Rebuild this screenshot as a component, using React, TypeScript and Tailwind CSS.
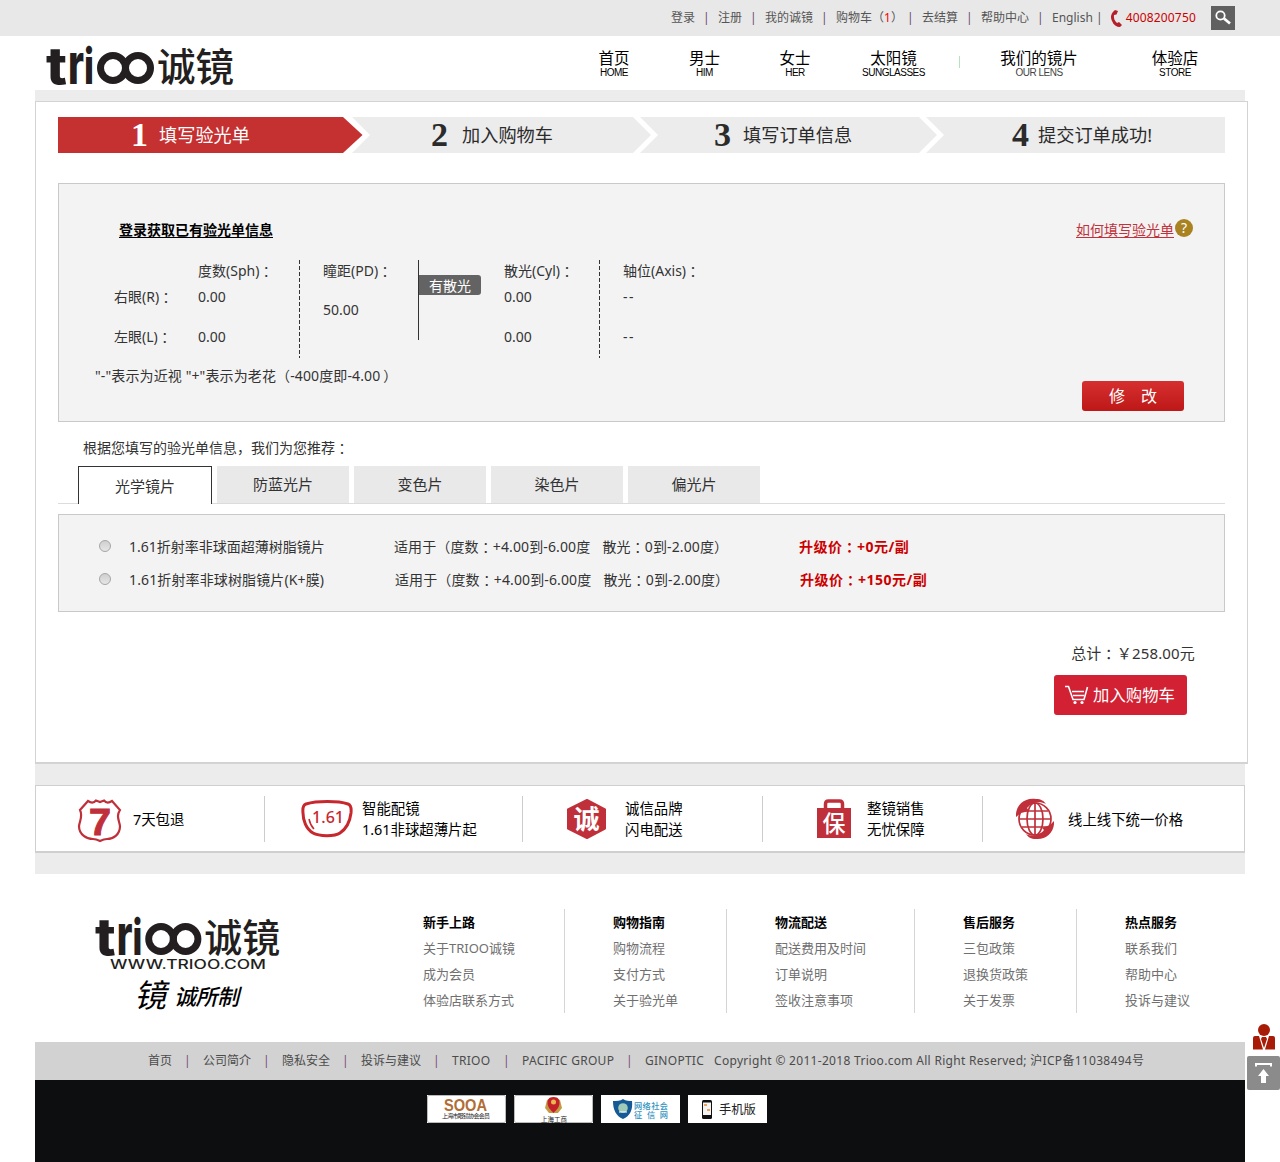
import React from 'react';

const SANS = "font-['Noto_Sans','Noto_Sans_CJK_SC',sans-serif]";
const CJK = 'Noto Sans CJK SC, sans-serif';

const Colon = () => <span className="-mr-[3.5px] pl-[3.5px]">：</span>;

function Brand() {
  return (
    <g fill="#231f20">
      <text x="0" y="38" fontFamily="Inter, sans-serif" fontWeight="800" fontSize="52" textLength="21" lengthAdjust="spacingAndGlyphs">t</text>
      <text x="22" y="38" fontFamily="Inter, sans-serif" fontWeight="800" fontSize="56" textLength="16" lengthAdjust="spacingAndGlyphs">r</text>
      <text x="38" y="38" fontFamily="Inter, sans-serif" fontWeight="800" fontSize="50" textLength="10" lengthAdjust="spacingAndGlyphs">i</text>
      <g fill="none" stroke="#231f20" strokeWidth="7">
        <circle cx="67" cy="22" r="12.500" />
        <circle cx="92" cy="22" r="12.500" />
      </g>
      <text x="111" y="34.500" fontFamily={CJK} fontWeight="500" fontSize="38.500" textLength="77" lengthAdjust="spacingAndGlyphs">诚镜</text>
    </g>
  );
}

const topLinks: [string, string][] = [
  ['登录', 'w-[47px]'],
  ['注册', 'w-[47px]'],
  ['我的诚镜', 'w-[71px]'],
  ['cart', 'w-[86px]'],
  ['去结算', 'w-[59px]'],
  ['帮助中心', 'w-[71px]'],
];

function TopBar() {
  return (
    <div className="flex h-9 items-center bg-[#e8e8e8] pl-[671px] text-xs text-[#555]">
      {topLinks.map(([label, w]) => (
        <div key={label} className={`flex shrink-0 whitespace-nowrap ${w}`}>
          {label === 'cart' ? (
            <span className="w-[74px]">购物车（<span className="text-[#f00]">1</span>）</span>
          ) : (
            <span>{label}</span>
          )}
          <span className={label === 'cart' ? '-ml-[3px] text-[#6b4b6b]' : 'ml-2 text-[#6b4b6b]'}>|</span>
        </div>
      ))}
      <span className="w-[44px]">English</span>
      <span>|</span>
      <svg className="ml-[7px]" width="13" height="19" viewBox="0 0 13 19">
        <path d="M5 1C1 4 0 8 2 12c1.500 4 4.500 6 8 6l2-2-3-3-2 1C4.500 12 3.500 9 4 6l2.500-.5L8 2Z" fill="#b41f2b" />
      </svg>
      <span className="ml-[3px] w-[85px] tracking-[0.17px] text-[#c00]">4008200750</span>
      <div className="flex h-6 w-6 items-center justify-center bg-[#606060]">
        <svg width="18" height="18" viewBox="0 0 18 18" fill="none" stroke="#fff">
          <circle cx="6.500" cy="6.500" r="4.200" strokeWidth="1.800" />
          <path d="m10 9.500 6 5" strokeWidth="2.800" />
        </svg>
      </div>
    </div>
  );
}

const nav: [string, string, string][] = [
  ['首页', 'HOME', 'w-[90px]'],
  ['男士', 'HIM', 'w-[91px]'],
  ['女士', 'HER', 'w-[90px]'],
  ['太阳镜', 'SUNGLASSES', 'w-[107px]'],
  ['我们的镜片', 'OUR LENS', 'w-[150px]'],
  ['体验店', 'STORE', 'w-[122px]'],
];

function Header() {
  return (
    <header className="flex h-[54px]">
      <svg className="mt-[10px] ml-[46px] shrink-0 overflow-visible" width="190" height="40" viewBox="0 0 190 40">
        <Brand />
      </svg>
      <nav className="ml-[333px] flex">
        {nav.map(([zh, en, w], i) => (
          <React.Fragment key={en}>
            {i === 4 && <span className="mt-5 ml-3 h-3 w-px bg-[#b5e3bc]" />}
            <a className={`flex flex-col items-center pt-3 text-black ${w} ${i === 4 ? 'ml-1' : ''}`}>
              <span className="text-[15.5px] leading-5">{zh}</span>
              <span className={`font-['Liberation_Sans',sans-serif] text-[10px] leading-[10px] tracking-[-0.5px] ${i === 4 ? 'text-[#444]' : ''}`}>{en}</span>
            </a>
          </React.Fragment>
        ))}
      </nav>
    </header>
  );
}

function Chevron({ first }: { first?: boolean }) {
  return first ? (
    <svg width="27" height="36" className="shrink-0">
      <path d="M0 0H9L27 18 9 36H0Z" fill="#fff" />
      <path d="M0 0 19.500 18 0 36Z" fill="#c53030" />
    </svg>
  ) : (
    <svg width="26" height="36" className="shrink-0">
      <path d="M0 0H7L25 18 7 36H0L18 18Z" fill="#fff" />
    </svg>
  );
}

function Step({ n, label, box, gap }: { n: string; label: string; box: string; gap: string }) {
  return (
    <div className={`flex h-9 shrink-0 items-center whitespace-nowrap text-[18.2px] ${box}`}>
      <span className={`shrink-0 font-['Liberation_Serif',serif] text-[34px] leading-9 font-bold ${gap}`}>{n}</span>
      <span className="pt-0.5">{label}</span>
    </div>
  );
}

function Steps() {
  return (
    <div className="ml-[22px] flex w-[1167px] bg-[#ececec] text-[#2b2b2b]">
      <Step n="1" label="填写验光单" box="w-[285px] bg-[#c53030] pl-[73px] text-white" gap="w-7" />
      <Chevron first />
      <Step n="2" label="加入购物车" box="w-[263px] pl-[61px]" gap="w-[31px]" />
      <Chevron />
      <Step n="3" label="填写订单信息" box="w-[260px] pl-[55px]" gap="w-[29px]" />
      <Chevron />
      <Step n="4" label="提交订单成功!" box="pl-[67px]" gap="w-[26px]" />
    </div>
  );
}

const Dashed = () => (
  <div className="h-[98px] w-px bg-[repeating-linear-gradient(to_bottom,#333_0_4px,transparent_4px_6px)]" />
);

function Values({ head, a, b, cls }: { head: React.ReactNode; a: string; b: string; cls: string }) {
  return (
    <div className={`flex flex-col whitespace-nowrap ${cls}`}>
      <span className="h-[22px] leading-[22px]">{head}</span>
      <span className="mt-1 h-[22px] leading-[22px]">{a}</span>
      <span className="mt-[18px] h-[22px] leading-[22px]">{b}</span>
    </div>
  );
}

function Prescription() {
  return (
    <section className="mt-[30px] ml-[22px] h-[239px] w-[1167px] border border-[#c9c9c9] bg-[#f3f3f3] pt-9 text-sm text-[#333]">
      <div className="flex h-5 justify-between pr-[31px] pl-[60px] leading-5">
        <a className="font-bold text-black underline underline-offset-2">登录获取已有验光单信息</a>
        <a className="flex text-[#c0323c]">
          <span className="underline underline-offset-2">如何填写验光单</span>
          <span className="-mt-px ml-px flex h-[18px] w-[18px] items-center justify-center rounded-full bg-[#a98321] text-[14px] text-white">?</span>
        </a>
      </div>
      <div className="mt-5 flex h-[98px] items-start pl-[55px]">
        <div className="flex w-[84px] flex-col whitespace-nowrap pt-[26px]">
          <span className="h-[22px] leading-[22px]">右眼(R)<Colon /></span>
          <span className="mt-[18px] h-[22px] leading-[22px]">左眼(L)<Colon /></span>
        </div>
        <Values cls="w-[101px]" head={<>度数(Sph)<Colon /></>} a="0.00" b="0.00" />
        <Dashed />
        <div className="ml-[23px] flex w-[95px] flex-col whitespace-nowrap">
          <span className="h-[22px] leading-[22px]">瞳距(PD)<Colon /></span>
          <span className="mt-[17px] h-[22px] leading-[22px]">50.00</span>
        </div>
        <div className="h-20 w-px bg-[#333]" />
        <span className="mt-[15px] h-5 w-[62px] rounded-r-[3px] bg-[#636363] text-center leading-[21px] text-white">有散光</span>
        <Values cls="ml-[23px] w-[95px]" head={<>散光(Cyl)<Colon /></>} a="0.00" b="0.00" />
        <Dashed />
        <Values cls="ml-[23px]" head={<>轴位(Axis)<Colon /></>} a="-&#8202;-" b="-&#8202;-" />
      </div>
      <div className="flex justify-between pr-10 pl-9">
        <p className="mt-[7px] leading-[22px] tracking-[0.12px] whitespace-pre">"-"表示为近视 "+"表示为老花（-400度即-4.00<span className="pl-[3px]">）</span></p>
        <button className="mt-[23px] h-[30px] w-[102px] rounded-[3px] bg-linear-to-b from-[#d62f2f] to-[#bd1717] text-base leading-[29px] whitespace-pre text-white">修<span className="ml-4">改</span></button>
      </div>
    </section>
  );
}

const tabs = ['光学镜片', '防蓝光片', '变色片', '染色片', '偏光片'];
const lenses = [
  { name: '1.61折射率非球面超薄树脂镜片', price: '0', pad: 'w-[265px]' },
  { name: '1.61折射率非球树脂镜片(K+膜)', price: '150', pad: 'w-[266px] tracking-[0.13px]' },
];

function Recommend() {
  return (
    <>
      <p className="mt-4 ml-[47px] h-5 text-sm leading-5 text-[#333]">根据您填写的验光单信息，我们为您推荐<Colon /></p>
      <div className="mt-2 ml-[22px] flex h-[38px] w-[1167px] gap-[5px] border-b border-[#dcdcdc] pl-5 text-[15px] text-[#333]">
        {tabs.map((t, i) => (
          <div
            key={t}
            className={
              i === 0
                ? 'h-[38px] w-[134px] shrink-0 border border-b-0 border-[#333] bg-white text-center leading-[38px]'
                : 'h-[37px] w-[132px] shrink-0 bg-[#e9e9e9] text-center leading-[37px]'
            }
          >
            {t}
          </div>
        ))}
      </div>
      <section className="mt-[10px] ml-[22px] h-[98px] w-[1167px] border border-[#c9c9c9] bg-[#f3f3f3] pt-[15px] text-sm text-[#333]">
        {lenses.map((l) => (
          <div key={l.price} className="flex h-[33px] items-center pl-10 whitespace-nowrap">
            <span className="-mt-px h-3 w-3 rounded-full border border-[#a5a5a5] bg-linear-to-b from-[#cfcfcf] to-[#e6e6e6]" />
            <span className={`ml-[18px] ${l.pad}`}>{l.name}</span>
            <span className="w-[405px] tracking-[0.12px] whitespace-pre">适用于（度数<Colon />+4.00到-6.00度<span className="ml-3">散光</span><Colon />0到-2.00度）</span>
            <span className="font-bold tracking-[0.5px] text-[#c00]">升级价<Colon />+{l.price}元/副</span>
          </div>
        ))}
      </section>
      <div className="flex flex-col items-end">
        <p className="mt-[30px] mr-[52px] h-[22px] text-[15px] leading-[22px] tracking-[0.17px] text-[#333]">总计<Colon />￥258.00元</p>
        <button className="mt-[11px] mr-[60px] flex h-10 w-[133px] items-center rounded-[3px] bg-[#d22133] pl-[11px] text-[16.4px] whitespace-nowrap text-white">
          <svg width="24" height="20" viewBox="0 0 24 20" fill="none" stroke="#fff" strokeWidth="1.600">
            <path d="M0 1.500h3.500L8 14.500h11L22.500 2M7 6.500h12M8 10.500h11" />
            <circle cx="10" cy="17.500" r="1.600" fill="#fff" stroke="none" />
            <circle cx="17" cy="17.500" r="1.600" fill="#fff" stroke="none" />
          </svg>
          <span className="ml-1">加入购物车</span>
        </button>
      </div>
    </>
  );
}

const RED = '#c0303a';

function ShieldIcon() {
  return (
    <svg width="44" height="44" viewBox="0 0 44 44" className="mt-[3px] shrink-0 overflow-visible">
      <path d="M10 2c3 2 6 2 8-.5L22 3l4-1.500C28 4 31 4 34 2l8 9c-4 6-1 10 0 16 0 9-7 13-13 13-3 0-5 1-7 2-2-1-4-2-7-2C9 40 1 36 1 27c1-6 4-10 1-16Z" fill="none" stroke={RED} strokeWidth="2.200" />
      <text x="22" y="36" textAnchor="middle" fontFamily="Liberation Sans, sans-serif" fontWeight="bold" fontSize="36" fill={RED} stroke={RED} strokeWidth="1" textLength="22" lengthAdjust="spacingAndGlyphs">7</text>
    </svg>
  );
}

function LensIcon() {
  return (
    <svg width="52" height="38" viewBox="0 0 52 38">
      <path d="M5 4C16 .8 37 .8 47 4c3 1 3.500 4 3 9-1 8-5 16-11 20-5 3.500-21 3.500-27 0C5 29 2 20 2 13c-.5-5 0-8 3-9Z" fill="none" stroke="#c6282e" strokeWidth="3" />
      <path d="M8 19c1 5 3 8 5 10" fill="none" stroke="#c6282e" strokeWidth="1.500" />
      <text x="11" y="23" fontFamily="Noto Sans, sans-serif" fontWeight="500" fontSize="16" fill="#c6282e" textLength="32">1.61</text>
    </svg>
  );
}

function HexIcon() {
  return (
    <svg width="42" height="42" viewBox="0 0 42 42">
      <path d="M21 2 39 11.500V30.500L21 40 2 30.500V11.500Z" fill={RED} stroke={RED} strokeWidth="2" strokeLinejoin="round" />
      <text x="20.500" y="31" textAnchor="middle" fontFamily={CJK} fontWeight="bold" fontSize="26" fill="#fff">诚</text>
    </svg>
  );
}

function BagIcon() {
  return (
    <svg width="34" height="40" viewBox="0 0 34 40">
      <path d="M8.500 10V5q0-3 3-3h11q3 0 3 3v5" fill="none" stroke={RED} strokeWidth="3.500" />
      <path d="M0 9H34V39H0Z" fill={RED} />
      <text x="17" y="33" textAnchor="middle" fontFamily={CJK} fontWeight="500" fontSize="23" fill="#fff">保</text>
    </svg>
  );
}

function GlobeIcon() {
  return (
    <svg width="38" height="42" viewBox="0 0 38 42">
      <g fill="none" stroke={RED} strokeWidth="1.700">
        <circle cx="19" cy="21" r="16" />
        <ellipse cx="19" cy="21" rx="8" ry="16" />
        <path d="M19 5v32M3 21h32M6 13h26M6 29h26" />
      </g>
      <path d="M0 19C-1 8 8-1 20 1c5 0 8 2 10 5-6-3-14-2-19 4l2 3-8 2Z" fill={RED} />
      <path d="M38 23c1 11-8 19-18 18-5 0-8-2-10-5 6 3 14 2 18-4l-2-2 8-3Z" fill={RED} />
    </svg>
  );
}

const features = [
  { icon: <ShieldIcon />, lines: ['7天包退'], box: 'w-[229px] pl-[42px]', gap: 'ml-[11px]' },
  { icon: <LensIcon />, lines: ['智能配镜', '1.61非球超薄片起'], box: 'w-[258px] pl-[36px]', gap: 'ml-[9px]' },
  { icon: <HexIcon />, lines: ['诚信品牌', '闪电配送'], box: 'w-[240px] pl-[43px]', gap: 'ml-[17px]' },
  { icon: <BagIcon />, lines: ['整镜销售', '无忧保障'], box: 'w-[220px] pl-[54px]', gap: 'ml-4' },
  { icon: <GlobeIcon />, lines: ['线上线下统一价格'], box: 'w-[261px] border-r-0 pl-[33px]', gap: 'ml-[14px]' },
];

function Features() {
  return (
    <div className="flex h-[68px] items-start border border-b-2 border-[#cfcfcf] bg-white pt-[10px] text-[14.4px] text-black">
      {features.map((f) => (
        <div key={f.lines[0]} className={`flex h-[46px] shrink-0 items-center border-r border-[#ccc] whitespace-nowrap ${f.box}`}>
          {f.icon}
          <div className={`flex flex-col leading-[21px] ${f.gap}`}>
            {f.lines.map((l) => <span key={l}>{l}</span>)}
          </div>
        </div>
      ))}
    </div>
  );
}

const columns = [
  { head: '新手上路', links: ['关于TRIOO诚镜', '成为会员', '体验店联系方式'], box: 'w-[141px]' },
  { head: '购物指南', links: ['购物流程', '支付方式', '关于验光单'], box: 'w-[162px] border-l pl-12' },
  { head: '物流配送', links: ['配送费用及时间', '订单说明', '签收注意事项'], box: 'w-[188px] border-l pl-12' },
  { head: '售后服务', links: ['三包政策', '退换货政策', '关于发票'], box: 'w-[162px] border-l pl-12' },
  { head: '热点服务', links: ['联系我们', '帮助中心', '投诉与建议'], box: 'w-[130px] border-l pl-12' },
];

const legal: [string, string][] = [
  ['首页', 'w-[55px]'],
  ['公司简介', 'w-[79px]'],
  ['隐私安全', 'w-[79px]'],
  ['投诉与建议', 'w-[91px]'],
  ['TRIOO', 'w-[70px] tracking-[0.3px]'],
  ['PACIFIC GROUP', 'w-[123px] tracking-[0.3px]'],
];

function Footer() {
  return (
    <footer>
      <div className="flex h-[168px] bg-white pt-[35px]">
        <svg className="mt-2 ml-[60px] shrink-0 overflow-visible" width="190" height="96" viewBox="0 0 190 96">
          <g transform="scale(.985 1)"><Brand /></g>
          <text x="15" y="52" fontFamily="Inter, sans-serif" fontWeight="500" fontSize="12.500" fill="#231f20" textLength="156" lengthAdjust="spacingAndGlyphs">WWW.TRIOO.COM</text>
          <g fontFamily={CJK} fill="#000" fontStyle="italic">
            <text x="39" y="90" fontSize="32" fontWeight="400">镜</text>
            <text x="79" y="88" fontSize="22" fontWeight="500" textLength="65">诚所制</text>
          </g>
        </svg>
        <div className="ml-[138px] flex h-[104px] text-[13px] leading-[26px] whitespace-nowrap text-[#707070]">
          {columns.map((c) => (
            <div key={c.head} className={`flex shrink-0 flex-col border-[#d5d5d5] ${c.box}`}>
              <span className="font-bold text-black">{c.head}</span>
              {c.links.map((l) => <a key={l}>{l}</a>)}
            </div>
          ))}
        </div>
      </div>
      <div className="flex h-[38px] items-center bg-[#d2d2d2] pl-[113px] text-xs whitespace-nowrap text-[#4b4b4b]">
        {legal.map(([t, w]) => (
          <div key={t} className={`flex shrink-0 justify-between ${w}`}>
            <span>{t}</span>
            <span className="w-[19px] text-[#7a4c7a]">|</span>
          </div>
        ))}
        <span className="w-[69px] tracking-[0.27px]">GINOPTIC</span>
        <span className="tracking-[0.3px]">Copyright © 2011-2018 Trioo.com All Right Reserved; 沪ICP备11038494号</span>
      </div>
      <div className="flex h-[83px] gap-2 bg-[#0c0e10] pt-[15px] pl-[392px]">
        <Badge framed>
          <text x="17" y="16" fontFamily="Liberation Sans, sans-serif" fontWeight="bold" fontSize="16" fill="#b06d35" textLength="43" lengthAdjust="spacingAndGlyphs">SOOA</text>
          <text x="15" y="23" fontFamily={CJK} fontSize="6" fill="#222" textLength="48">上海市眼镜协会会员</text>
        </Badge>
        <Badge framed>
          <path d="M33 5q6-5 13 0l2 8-4 5h-9l-4-5Z" fill="#c49b45" />
          <path d="M39.500 2c5 0 6 3 6 6 0 4-3 7-6 10-3-3-6-6-6-10 0-3 1-6 6-6Z" fill="#c3202a" />
          <circle cx="39.500" cy="7" r="2.500" fill="#e6b84d" />
          <text x="27" y="26.500" fontFamily={CJK} fontSize="6.500" fill="#222">上海工商</text>
        </Badge>
        <Badge>
          <path d="M12 6c4 0 7 0 10-2 3 2 6 2 9 2 1 9-2 15-9 18-7-3-10-9-10-18Z" fill="#155a94" />
          <circle cx="22" cy="13" r="4.800" fill="#9fcbb8" />
          <path d="M18 17h8" stroke="#fff" />
          <g fontFamily={CJK} fontWeight="500" fontSize="8.200" fill="#3192c0">
            <text x="33" y="14" textLength="34">网络社会</text>
            <text x="33" y="23" textLength="34">征信网</text>
          </g>
        </Badge>
        <Badge>
          <rect x="14" y="5" width="10" height="19" rx="1.500" fill="#111" />
          <rect x="15" y="7.500" width="8" height="12.500" fill="#f4f4f4" />
          <path d="M16 10h3M19 15h3" stroke="#e58a2d" strokeWidth="1.500" />
          <text x="31" y="19" fontFamily={CJK} fontSize="12.300" fill="#222">手机版</text>
        </Badge>
      </div>
    </footer>
  );
}

function Badge({ children, framed }: { children: React.ReactNode; framed?: boolean }) {
  return (
    <svg width="79" height="28" viewBox="0 0 79 28" className="shrink-0 bg-white">
      {framed && <rect x="0.500" y="0.500" width="78" height="27" rx="1.500" fill="none" stroke="#bbb" />}
      {children}
    </svg>
  );
}

function FloatingTools() {
  return (
    <aside className="absolute top-[1023px] right-0 flex w-[33px] flex-col items-center">
      <svg width="22" height="27" viewBox="0 0 22 27" fill="#a81c07">
        <circle cx="11" cy="7" r="6" />
        <path d="M0 15q0-2 2-2h4l4 13.500H0ZM22 15q0-2-2-2h-4l-4 13.500H22Z" />
        <path d="M9 14h4l1 2-3 9-3-9Z" />
      </svg>
      <div className="mt-[6px] flex h-[34px] w-[33px] items-center justify-center rounded-[2px] bg-[#8b8b8b]">
        <svg width="17" height="22" viewBox="0 0 17 22">
          <path d="M1 4.500V2h15v2.500" fill="none" stroke="#fff" strokeWidth="2" />
          <path d="M8.500 7 14 14h-3v7H6v-7H3Z" fill="#fff" />
        </svg>
      </div>
    </aside>
  );
}

export default function App() {
  return (
    <div className={`relative h-[1162px] w-[1280px] overflow-hidden bg-white ${SANS}`}>
      <TopBar />
      <Header />
      <div className="ml-[35px] w-[1210px] bg-[#ececec]">
        <div className="pt-[11px] pb-[21px]">
          <main className="-mr-[3px] mb-[21px] h-[663px] w-[1213px] border border-b-2 border-[#d3d3d3] bg-white pt-[15px]">
            <Steps />
            <Prescription />
            <Recommend />
          </main>
          <Features />
        </div>
        <Footer />
      </div>
      <FloatingTools />
    </div>
  );
}
